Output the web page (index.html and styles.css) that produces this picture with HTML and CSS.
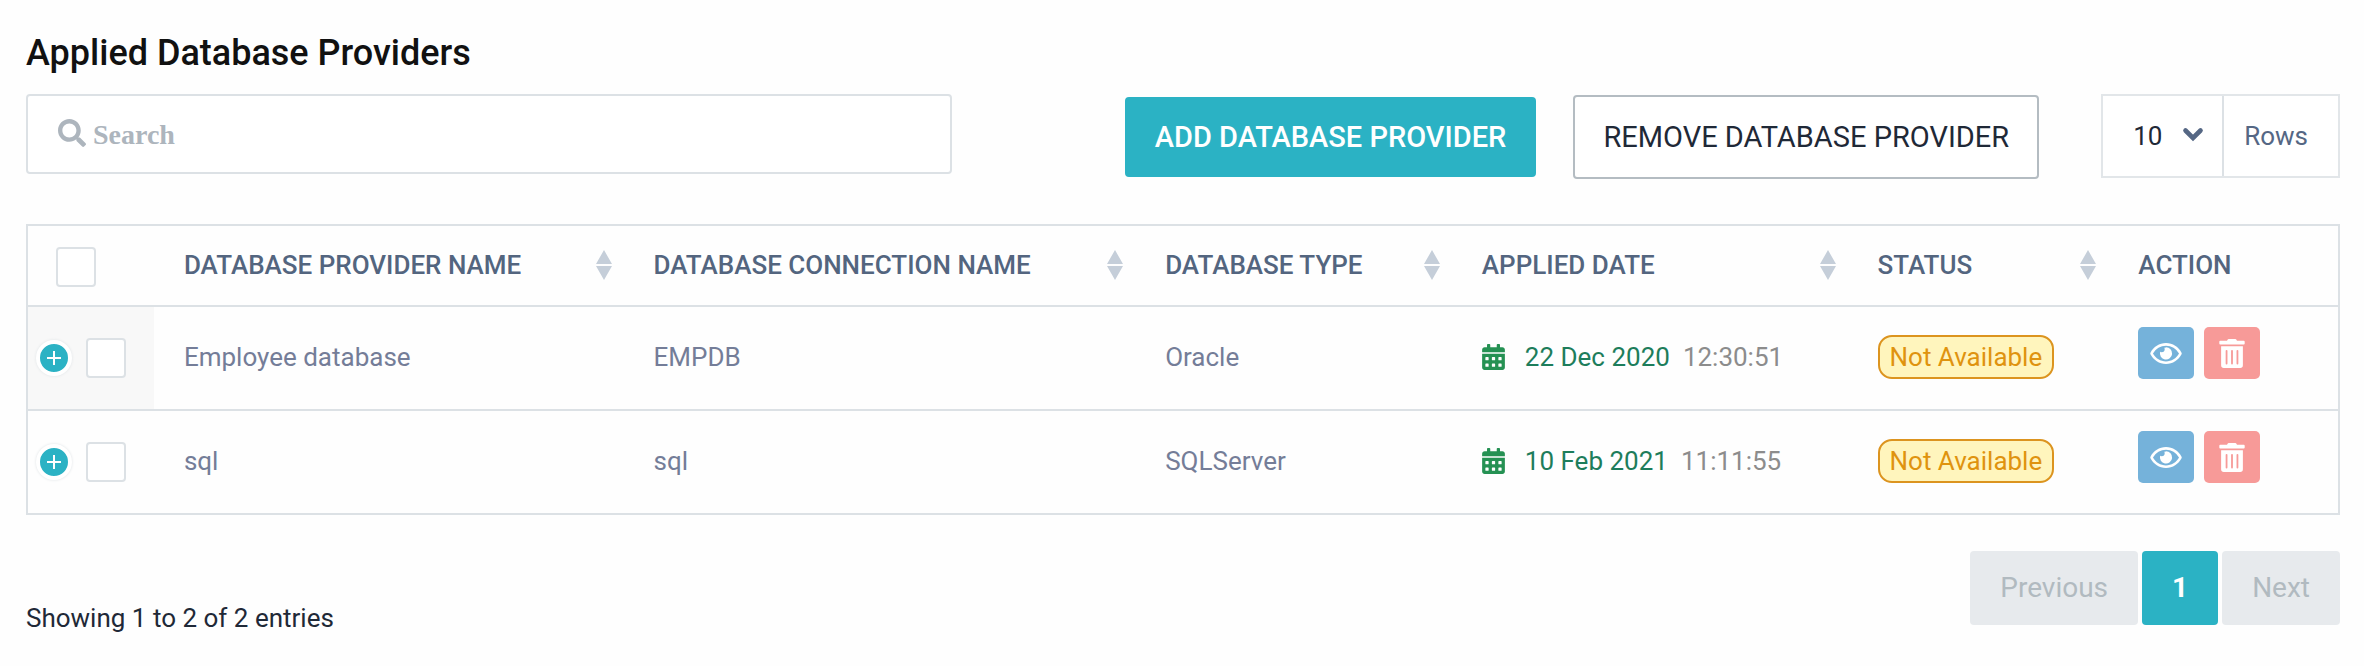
FILE: index.html
```html
<!DOCTYPE html>
<html lang="en">
<head>
<meta charset="utf-8">
<title>Applied Database Providers</title>
<link rel="stylesheet" href="styles.css">
</head>
<body>
<svg class="sprite" aria-hidden="true">
  <symbol id="i-search" viewBox="0 0 512 512"><path d="M505 442.700 405.300 343c-4.500-4.500-10.600-7-17-7H372c27.600-35.300 44-79.700 44-128C416 93.100 322.900 0 208 0S0 93.100 0 208s93.100 208 208 208c48.300 0 92.700-16.400 128-44v16.300c0 6.400 2.500 12.500 7 17l99.700 99.700c9.400 9.400 24.600 9.400 33.900 0l28.300-28.300c9.400-9.400 9.400-24.600.1-34zM208 336c-70.700 0-128-57.200-128-128 0-70.700 57.200-128 128-128 70.700 0 128 57.200 128 128 0 70.700-57.200 128-128 128z"/></symbol>
  <symbol id="i-chevron" viewBox="0 0 22 15"><path d="M3.500 3.500 11 11l7.500-7.500" fill="none" stroke="currentColor" stroke-width="4.600" stroke-linecap="round"/></symbol>
  <symbol id="i-sort" viewBox="0 0 16 30"><path d="M8 0l8 14H0zM8 30l8-14H0z"/></symbol>
  <symbol id="i-plus" viewBox="0 0 14 14"><path d="M6 0h2v6h6v2H8v6H6V8H0V6h6z"/></symbol>
  <symbol id="i-calendar" viewBox="0 0 448 512"><path d="M0 464c0 26.500 21.500 48 48 48h352c26.500 0 48-21.500 48-48V192H0v272zm320-196c0-6.600 5.400-12 12-12h40c6.600 0 12 5.400 12 12v40c0 6.600-5.400 12-12 12h-40c-6.600 0-12-5.400-12-12v-40zm0 128c0-6.600 5.400-12 12-12h40c6.600 0 12 5.400 12 12v40c0 6.600-5.400 12-12 12h-40c-6.600 0-12-5.400-12-12v-40zM192 268c0-6.600 5.400-12 12-12h40c6.600 0 12 5.400 12 12v40c0 6.600-5.400 12-12 12h-40c-6.600 0-12-5.400-12-12v-40zm0 128c0-6.600 5.400-12 12-12h40c6.600 0 12 5.400 12 12v40c0 6.600-5.400 12-12 12h-40c-6.600 0-12-5.400-12-12v-40zM64 268c0-6.600 5.400-12 12-12h40c6.600 0 12 5.400 12 12v40c0 6.600-5.400 12-12 12H76c-6.600 0-12-5.400-12-12v-40zm0 128c0-6.600 5.400-12 12-12h40c6.600 0 12 5.400 12 12v40c0 6.600-5.400 12-12 12H76c-6.600 0-12-5.400-12-12v-40zM400 64h-48V16c0-8.800-7.200-16-16-16h-32c-8.800 0-16 7.200-16 16v48H160V16c0-8.800-7.200-16-16-16h-32c-8.800 0-16 7.200-16 16v48H48C21.500 64 0 85.500 0 112v48h448v-48c0-26.500-21.500-48-48-48z"/></symbol>
  <symbol id="i-eye" viewBox="0 0 576 384"><path d="M288 80a111.200 111.200 0 0 0-31.200 5A55.500 55.500 0 0 1 264 112a56 56 0 0 1-56 56 55.500 55.500 0 0 1-27-7.200A111.700 111.700 0 1 0 288 80zm284.500 97.400C518.300 71.600 410.900 0 288 0S57.700 71.600 3.500 177.400a32.400 32.400 0 0 0 0 29.200C57.700 312.400 165.100 384 288 384s230.300-71.600 284.500-177.400a32.400 32.400 0 0 0 0-29.200zM288 336c-98.600 0-189.100-55-237.900-144C98.900 103 189.400 48 288 48s189.100 55 237.900 144C477.100 281 386.600 336 288 336z"/></symbol>
  <symbol id="i-trash" viewBox="0 0 448 512"><path d="M32 464a48 48 0 0 0 48 48h288a48 48 0 0 0 48-48V128H32zm272-256a16 16 0 0 1 32 0v224a16 16 0 0 1-32 0zm-96 0a16 16 0 0 1 32 0v224a16 16 0 0 1-32 0zm-96 0a16 16 0 0 1 32 0v224a16 16 0 0 1-32 0zM432 32H312l-9.400-18.700A24 24 0 0 0 281.100 0H166.800a23.700 23.700 0 0 0-21.400 13.300L136 32H16A16 16 0 0 0 0 48v32a16 16 0 0 0 16 16h416a16 16 0 0 0 16-16V48a16 16 0 0 0-16-16z"/></symbol>
</svg>

<main class="page">
  <h1 class="title">Applied Database Providers</h1>

  <div class="toolbar">
    <label class="search">
      <svg class="search-icon" aria-hidden="true"><use href="#i-search"/></svg>
      <input class="search-input" type="search" placeholder="Search" aria-label="Search">
    </label>
    <div class="actions">
      <button class="btn btn-primary" type="button">ADD DATABASE PROVIDER</button>
      <button class="btn btn-outline" type="button">REMOVE DATABASE PROVIDER</button>
      <div class="rows">
        <div class="rows-picker">
          <select class="rows-select" id="rows"><option>10</option><option>25</option><option>50</option></select>
          <svg class="rows-chevron" aria-hidden="true"><use href="#i-chevron"/></svg>
        </div>
        <label class="rows-label" for="rows">Rows</label>
      </div>
    </div>
  </div>

  <table class="grid">
    <colgroup>
      <col class="c-select"><col class="c-name"><col class="c-conn"><col class="c-type"><col class="c-date"><col class="c-status"><col class="c-action">
    </colgroup>
    <thead>
      <tr>
        <th class="select-head"><input class="check" type="checkbox" aria-label="Select all"></th>
        <th><div class="head">DATABASE PROVIDER NAME<svg class="sort" aria-hidden="true"><use href="#i-sort"/></svg></div></th>
        <th><div class="head">DATABASE CONNECTION NAME<svg class="sort" aria-hidden="true"><use href="#i-sort"/></svg></div></th>
        <th><div class="head">DATABASE TYPE<svg class="sort" aria-hidden="true"><use href="#i-sort"/></svg></div></th>
        <th><div class="head">APPLIED DATE<svg class="sort" aria-hidden="true"><use href="#i-sort"/></svg></div></th>
        <th><div class="head">STATUS<svg class="sort" aria-hidden="true"><use href="#i-sort"/></svg></div></th>
        <th><div class="head">ACTION</div></th>
      </tr>
    </thead>
    <tbody>
      <tr>
        <td class="select-cell sorted"><div class="select-tools"><button class="expand" type="button" aria-label="Expand row"><svg class="plus"><use href="#i-plus"/></svg></button><input class="check" type="checkbox" aria-label="Select Employee database"></div></td>
        <td>Employee database</td>
        <td>EMPDB</td>
        <td>Oracle</td>
        <td><div class="date"><svg class="calendar" aria-hidden="true"><use href="#i-calendar"/></svg><span class="day">22 Dec 2020</span><span class="time">12:30:51</span></div></td>
        <td><span class="badge">Not Available</span></td>
        <td><div class="tools"><button class="tool view" type="button" aria-label="View"><svg class="eye"><use href="#i-eye"/></svg></button><button class="tool delete" type="button" aria-label="Delete"><svg class="trash"><use href="#i-trash"/></svg></button></div></td>
      </tr>
      <tr>
        <td class="select-cell"><div class="select-tools"><button class="expand" type="button" aria-label="Expand row"><svg class="plus"><use href="#i-plus"/></svg></button><input class="check" type="checkbox" aria-label="Select sql"></div></td>
        <td>sql</td>
        <td>sql</td>
        <td>SQLServer</td>
        <td><div class="date"><svg class="calendar" aria-hidden="true"><use href="#i-calendar"/></svg><span class="day">10 Feb 2021</span><span class="time">11:11:55</span></div></td>
        <td><span class="badge">Not Available</span></td>
        <td><div class="tools"><button class="tool view" type="button" aria-label="View"><svg class="eye"><use href="#i-eye"/></svg></button><button class="tool delete" type="button" aria-label="Delete"><svg class="trash"><use href="#i-trash"/></svg></button></div></td>
      </tr>
    </tbody>
  </table>

  <div class="footer">
    <p class="summary">Showing 1 to 2 of 2 entries</p>
    <nav class="pager" aria-label="Pagination">
      <button class="page-btn" type="button" disabled>Previous</button>
      <button class="page-btn current" type="button" aria-current="page">1</button>
      <button class="page-btn" type="button" disabled>Next</button>
    </nav>
  </div>
</main>
</body>
</html>
```

FILE: styles.css
```css
* {
  box-sizing: border-box;
}

body {
  margin: 0;
  background: #fefefe;
  color: #1f2937;
  font-family: Roboto, "Liberation Sans", sans-serif;
  font-size: 26px;
  line-height: 32px;
}

button,
select,
input {
  margin: 0;
  font: inherit;
  color: inherit;
}

svg {
  display: block;
  flex: none;
  fill: currentColor;
}

.sprite {
  position: absolute;
  width: 0;
  height: 0;
}

.page {
  padding: 33px 24px 32px 26px;
}

.title {
  margin: 0 0 21px;
  color: #111;
  font-size: 36px;
  font-weight: 500;
  line-height: 40px;
}

.toolbar {
  display: flex;
  align-items: flex-start;
  justify-content: space-between;
  margin-bottom: 45px;
}

.search {
  position: relative;
  width: 40%;
  color: #adb5bd;
}

.search-icon {
  position: absolute;
  top: 25px;
  left: 32px;
  width: 28px;
  height: 28px;
}

.search-input {
  display: block;
  width: 100%;
  height: 80px;
  padding: 2px 32px 0 65px;
  border: 2px solid #dce1e5;
  border-radius: 4px;
  background: #fff;
  appearance: none;
  color: #1f2937;
  font-family: "Liberation Serif", serif;
  font-size: 28px;
  font-weight: 700;
}

.search-input::placeholder {
  color: #adb5bd;
  opacity: 1;
}

.actions {
  display: flex;
  align-items: flex-start;
}

.btn {
  padding: 0 28px;
  border: 2px solid #b4bcc2;
  border-radius: 4px;
  background: #fff;
  font-size: 29px;
}

.btn-primary {
  height: 80px;
  margin: 3px 37px 0 0;
  border-color: #2bb2c4;
  background: #2bb2c4;
  color: #fff;
  font-weight: 500;
}

.btn-outline {
  height: 84px;
  margin: 1px 62px 0 0;
}

.rows {
  display: flex;
  height: 84px;
  border: 2px solid #e2e6e9;
  background: #fff;
}

.rows-picker {
  position: relative;
  display: flex;
}

.rows-select {
  width: 119px;
  padding: 0 30px;
  border: 0;
  background: transparent;
  appearance: none;
}

.rows-chevron {
  position: absolute;
  top: 31px;
  right: 18px;
  width: 22px;
  height: 15px;
  color: #556784;
  pointer-events: none;
}

.rows-label {
  display: flex;
  align-items: center;
  padding: 0 30px 0 20px;
  border-left: 2px solid #dce1e5;
  color: #556784;
}

.grid {
  width: 100%;
  border: 2px solid #dce1e5;
  border-spacing: 0;
  table-layout: fixed;
  color: #747d98;
}

.c-select { width: 5.450%; }
.c-name { width: 20.330%; }
.c-conn { width: 22.150%; }
.c-type { width: 13.710%; }
.c-date { width: 17.130%; }
.c-status { width: 11.290%; }

.grid th,
.grid td {
  padding: 0 0 2px 30px;
  text-align: left;
  white-space: nowrap;
}

.grid th {
  height: 79px;
  color: #53657f;
  font-weight: 500;
}

.grid td {
  height: 104px;
  border-top: 2px solid #dce1e5;
}

.head {
  display: flex;
  align-items: center;
  justify-content: space-between;
  padding-right: 12px;
}

.sort {
  width: 16px;
  height: 30px;
  color: #c5ced9;
}

.check {
  display: block;
  width: 40px;
  height: 40px;
  border: 2px solid #dce1e5;
  border-radius: 4px;
  background: #fff;
  appearance: none;
}

.grid .select-head {
  padding: 2px 0 0 28px;
}

.grid .select-cell {
  padding: 0 0 0 8px;
}

.grid .sorted {
  background: #f8f8f8;
}

.select-tools {
  display: flex;
  align-items: center;
  gap: 14px;
}

.expand {
  display: flex;
  align-items: center;
  justify-content: center;
  width: 36px;
  height: 36px;
  padding: 0;
  border: 4px solid #fff;
  border-radius: 50%;
  background: #2bb2c4;
  box-shadow: 0 0 3px #dfe3e6;
  color: #fff;
}

.plus {
  width: 14px;
  height: 14px;
}

.date {
  display: flex;
  align-items: center;
}

.calendar {
  width: 23px;
  height: 26px;
  margin-right: 20px;
  color: #259153;
}

.day {
  margin-right: 13px;
  color: #1d7d5b;
}

.time {
  color: #8c8c8c;
}

.badge {
  display: inline-block;
  padding: 4px 10px;
  border: 2px solid #dc941f;
  border-radius: 14px;
  background: #fff5bd;
  color: #df930f;
}

.tools {
  display: flex;
  gap: 10px;
  margin-bottom: 8px;
}

.tool {
  display: flex;
  align-items: center;
  justify-content: center;
  width: 56px;
  height: 52px;
  padding: 0;
  border: 0;
  border-radius: 5px;
  color: #fff;
}

.view {
  background: #75b2da;
}

.delete {
  background: #f79a98;
}

.eye {
  width: 32px;
  height: 21px;
}

.trash {
  width: 26px;
  height: 29px;
}

.footer {
  display: flex;
  justify-content: space-between;
  margin-top: 36px;
}

.summary {
  margin: 51px 0 0;
}

.pager {
  display: flex;
  gap: 4px;
}

.page-btn {
  height: 74px;
  padding: 0 30px;
  border: 0;
  border-radius: 4px;
  background: #e7eaed;
  color: #b1bac0;
  font-size: 28px;
}

.current {
  background: #2bb2c4;
  color: #fff;
  font-weight: 700;
}
```
